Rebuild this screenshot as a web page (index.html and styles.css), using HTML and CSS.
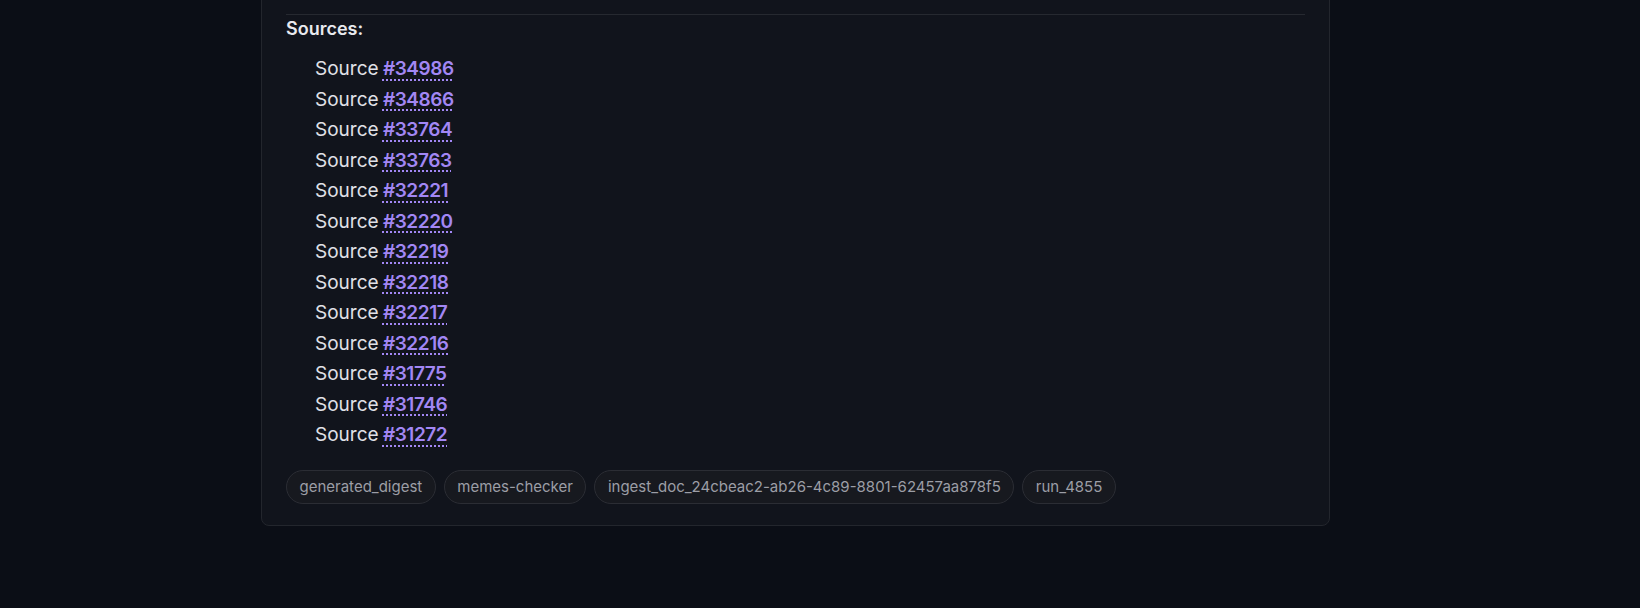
FILE: index.html
```html
<!DOCTYPE html>
<html lang="en">
<head>
<meta charset="utf-8">
<title>Sources</title>
<link rel="stylesheet" href="styles.css">
</head>
<body>
<main class="page">
  <article class="card">
    <hr class="divider">
    <h3 class="sources-title">Sources:</h3>
    <ul class="sources">
      <li>Source <a href="#" class="src">#34986</a></li>
      <li>Source <a href="#" class="src">#34866</a></li>
      <li>Source <a href="#" class="src">#33764</a></li>
      <li>Source <a href="#" class="src">#33763</a></li>
      <li>Source <a href="#" class="src">#32221</a></li>
      <li>Source <a href="#" class="src">#32220</a></li>
      <li>Source <a href="#" class="src">#32219</a></li>
      <li>Source <a href="#" class="src">#32218</a></li>
      <li>Source <a href="#" class="src">#32217</a></li>
      <li>Source <a href="#" class="src">#32216</a></li>
      <li>Source <a href="#" class="src">#31775</a></li>
      <li>Source <a href="#" class="src">#31746</a></li>
      <li>Source <a href="#" class="src">#31272</a></li>
    </ul>
    <div class="tags">
      <span class="tag">generated_digest</span>
      <span class="tag">memes-checker</span>
      <span class="tag">ingest_doc_24cbeac2-ab26-4c89-8801-62457aa878f5</span>
      <span class="tag">run_4855</span>
    </div>
  </article>
</main>
</body>
</html>
```

FILE: styles.css
```css
* { box-sizing: border-box; }
html, body {
  margin: 0;
  padding: 0;
  background: #0b0e16;
  font-family: Inter, "Noto Sans", "Liberation Sans", sans-serif;
  color: #e2e3e8;
}
.page {
  padding-left: 261px;
}
.card {
  width: 1069px;
  margin-top: -20px;
  padding: 33px 24px 21px;
  background: #11141c;
  border: 1px solid #23262d;
  border-radius: 8px;
}
.divider {
  margin: 0;
  border: 0;
  border-top: 1px solid #262930;
}
.sources-title {
  margin: 0;
  font-size: 18px;
  line-height: 27px;
  font-weight: 600;
  color: #e8e9ee;
}
.sources {
  list-style: none;
  margin: 12px 0 0;
  padding: 0 0 0 29px;
}
.sources li {
  font-size: 19px;
  line-height: 30.5px;
  color: #e0e1e7;
  word-spacing: -1px;
}
.src {
  color: #a287f4;
  font-weight: 600;
  text-decoration: underline dotted;
  text-decoration-thickness: 2px;
  text-underline-offset: 4px;
  letter-spacing: -0.45px;
}
.tags {
  display: flex;
  gap: 8px;
  margin-top: 19px;
}
.tag {
  height: 34px;
  display: inline-flex;
  align-items: center;
  padding: 0 12.5px;
  border: 1px solid #2b2d34;
  border-radius: 17px;
  background: #17191f;
  font-size: 15px;
  color: #9c9ea6;
}
```
